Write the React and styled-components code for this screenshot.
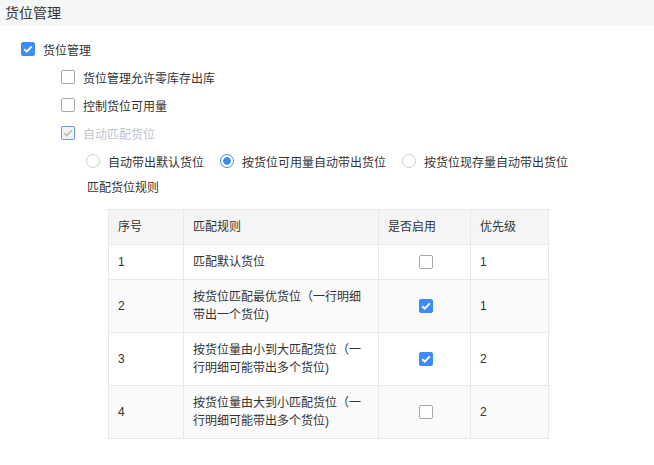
import React from 'react'
import styled, { createGlobalStyle } from 'styled-components'

const GlobalStyle = createGlobalStyle`
  body {
    margin: 0;
    background: #fff;
    font-family: "Liberation Sans", "Noto Sans CJK SC", sans-serif;
    color: #333;
  }
`

const rules = [
  { id: 1, text: '匹配默认货位', on: false, level: 1 },
  { id: 2, text: '按货位匹配最优货位（一行明细带出一个货位)', on: true, level: 1 },
  { id: 3, text: '按货位量由小到大匹配货位（一行明细可能带出多个货位)', on: true, level: 2 },
  { id: 4, text: '按货位量由大到小匹配货位（一行明细可能带出多个货位)', on: false, level: 2 },
]

const radios = [
  { label: '自动带出默认货位', checked: false },
  { label: '按货位可用量自动带出货位', checked: true },
  { label: '按货位现存量自动带出货位', checked: false },
]

const Checkbox = ({ checked, disabled }) => (
  <Box $checked={checked} $disabled={disabled}>
    {checked && (
      <svg width='10' height='8' viewBox='0 0 10 8'>
        <path
          d='M1.2 4.2 L3.8 6.6 L8.8 1.4'
          fill='none'
          stroke={disabled ? '#c2c2c2' : '#fff'}
          strokeWidth='2'
        />
      </svg>
    )}
  </Box>
)

const App = () => {
  return (
    <>
      <GlobalStyle />
      <Header>货位管理</Header>
      <Content>
        <OptionRow>
          <Checkbox checked />
          <Label>货位管理</Label>
        </OptionRow>
        <OptionRow $indent={40}>
          <Checkbox />
          <Label>货位管理允许零库存出库</Label>
        </OptionRow>
        <OptionRow $indent={40}>
          <Checkbox />
          <Label>控制货位可用量</Label>
        </OptionRow>
        <OptionRow $indent={40}>
          <Checkbox checked disabled />
          <Label $disabled>自动匹配货位</Label>
        </OptionRow>
        <RadioRow>
          {radios.map((r) => (
            <RadioItem key={r.label}>
              <Radio $checked={r.checked} />
              <Label>{r.label}</Label>
            </RadioItem>
          ))}
        </RadioRow>
        <RulesTitle>匹配货位规则</RulesTitle>
        <Table>
          <colgroup>
            <col style={{ width: 75 }} />
            <col style={{ width: 195 }} />
            <col style={{ width: 92 }} />
            <col style={{ width: 78 }} />
          </colgroup>
          <thead>
            <tr>
              <Th>序号</Th>
              <Th>匹配规则</Th>
              <Th>是否启用</Th>
              <Th>优先级</Th>
            </tr>
          </thead>
          <tbody>
            {rules.map((r, i) => (
              <Tr key={r.id} $striped={i % 2 === 1}>
                <Td>{r.id}</Td>
                <Td>{r.text}</Td>
                <Td $center>
                  <CellCheck>
                    <Checkbox checked={r.on} />
                  </CellCheck>
                </Td>
                <Td>{r.level}</Td>
              </Tr>
            ))}
          </tbody>
        </Table>
      </Content>
    </>
  )
}

export default App

const Header = styled.div`
  height: 26px;
  line-height: 26px;
  padding-left: 5px;
  background: #f5f6f7;
  font-size: 14px;
  color: #333;
`

const Content = styled.div`
  padding: 9px 0 20px 21px;
  display: flex;
  flex-direction: column;
`

const OptionRow = styled.div`
  display: flex;
  align-items: center;
  gap: 8px;
  height: 28px;
  padding-left: ${(p) => p.$indent || 0}px;
`

const Label = styled.span`
  font-size: 12px;
  color: ${(p) => (p.$disabled ? '#c0c4cc' : '#333')};
  white-space: nowrap;
`

const Box = styled.span`
  box-sizing: border-box;
  width: 14px;
  height: 14px;
  display: inline-flex;
  align-items: center;
  justify-content: center;
  border-radius: 2px;
  flex-shrink: 0;
  border: 1px solid
    ${(p) => (p.$disabled ? '#5a9bf6' : p.$checked ? '#3b8cf6' : '#a8a8a8')};
  background: ${(p) =>
    p.$disabled ? '#f2f2f2' : p.$checked ? '#3b8cf6' : '#fff'};
`

const RadioRow = styled.div`
  display: flex;
  align-items: center;
  gap: 16px;
  height: 28px;
  padding-left: 65px;
`

const RadioItem = styled.label`
  display: flex;
  align-items: center;
  gap: 8px;
`

const Radio = styled.span`
  box-sizing: border-box;
  width: 14px;
  height: 14px;
  border-radius: 50%;
  flex-shrink: 0;
  border: 1px solid ${(p) => (p.$checked ? '#3b8cf6' : '#d0d0d0')};
  background: ${(p) =>
    p.$checked
      ? 'radial-gradient(circle, #3b8cf6 0 3.5px, #fff 4px)'
      : '#fff'};
`

const RulesTitle = styled.div`
  height: 26px;
  line-height: 26px;
  padding-left: 66px;
  font-size: 12px;
  color: #333;
`

const Table = styled.table`
  margin: 8px 0 0 87px;
  width: 440px;
  table-layout: fixed;
  border-collapse: collapse;
  font-size: 12px;
`

const Th = styled.th`
  text-align: left;
  font-weight: normal;
  background: #f5f5f5;
  border: 1px solid #e8e8e8;
  padding: 8px 9px;
  line-height: 18px;
  color: #333;
`

const Tr = styled.tr`
  background: ${(p) => (p.$striped ? '#fafafa' : '#fff')};
`

const Td = styled.td`
  border: 1px solid #e8e8e8;
  padding: 8px 9px;
  line-height: 18px;
  color: #333;
  text-align: ${(p) => (p.$center ? 'center' : 'left')};
  vertical-align: middle;
`

const CellCheck = styled.div`
  display: flex;
  justify-content: center;
  padding-left: 2px;
`
